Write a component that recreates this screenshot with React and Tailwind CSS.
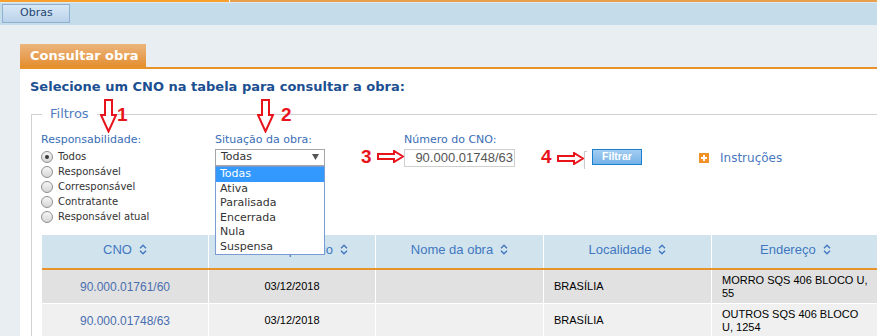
import React from "react";

function DownArrow() {
  return (
    <svg width="17" height="34" viewBox="0 0 17 34">
      <polygon points="5,1 12,1 12,16 16,16 8.5,32.5 1,16 5,16" fill="white" stroke="#e8141c" strokeWidth="2" />
    </svg>
  );
}

function RightArrow() {
  return (
    <svg width="27" height="13" viewBox="0 0 27 13">
      <polygon points="1,4 17,4 17,1 26,6.5 17,12 17,9 1,9" fill="white" stroke="#e8141c" strokeWidth="2" />
    </svg>
  );
}

function SortIcon() {
  return (
    <svg width="8" height="11" viewBox="0 0 8 11" fill="none" stroke="currentColor" strokeWidth="1.4">
      <polyline points="1,4.2 4,1.2 7,4.2" />
      <polyline points="1,6.8 4,9.8 7,6.8" />
    </svg>
  );
}

function Radio({ checked, label }) {
  return (
    <div className="flex items-center h-[15px]">
      <div className="w-[12px] h-[12px] rounded-full border border-[#8e8f8f] bg-gradient-to-b from-[#f6f6f6] to-[#d6d6d6] flex items-center justify-center">
        {checked && <div className="w-[4px] h-[4px] rounded-full bg-[#3a3a3a]" />}
      </div>
      <span className="ml-[5px] text-[10px] text-[#333] leading-none">{label}</span>
    </div>
  );
}

export default function App() {
  const options = ["Todas", "Ativa", "Paralisada", "Encerrada", "Nula", "Suspensa"];
  return (
    <div className="relative w-[877px] h-[336px] overflow-hidden bg-[#e9eef3] font-['DejaVu_Sans',sans-serif]">
      {/* top line */}
      <div className="flex h-[2px]">
        <div className="w-[229px] bg-[#f7a02e]" />
        <div className="w-[1px] bg-white" />
        <div className="flex-1 bg-[#e9a04c]" />
      </div>
      <div className="h-[1px] bg-[#dfe9f1]" />
      {/* menu bar */}
      <div className="h-[22px] bg-[#c5dcea] pl-[2px] pt-[1px]">
        <div className="w-[68px] h-[19px] border border-[#8fb0cf] bg-gradient-to-b from-[#d8e8f6] to-[#bad2ea] flex items-center pl-[17px] text-[11px] text-[#24456f]">
          Obras
        </div>
      </div>
      {/* main area */}
      <div className="pl-[20px] pt-[19px]">
        <div className="w-[126px] h-[23px] bg-gradient-to-b from-[#ecb57b] to-[#e38e2a] text-white font-bold text-[13px] pl-[10px] flex items-center">
          Consultar obra
        </div>
        <div className="h-[2px] bg-[#e8922c]" />
        <div className="bg-white h-[400px] pl-[10px] pt-[10px]">
          <div className="text-[13px] leading-[16px] font-bold text-[#1c4f91]">
            Selecione um CNO na tabela para consultar a obra:
          </div>
          <fieldset className="mt-[11px] ml-[1px] w-[900px] border border-[#d0d0d0] pl-[10px] pb-[20px]">
            <legend className="px-[8px] text-[13px] leading-[16px] text-[#4f7cc0]">Filtros</legend>
            <div className="pt-[11px] flex items-start">
              {/* col 1 */}
              <div className="w-[173px] -ml-[1px]">
                <div className="text-[11px] leading-[14px] text-[#3a6db5]">Responsabilidade:</div>
                <div className="mt-[2px] flex flex-col">
                  <Radio checked label="Todos" />
                  <Radio label="Responsável" />
                  <Radio label="Corresponsável" />
                  <Radio label="Contratante" />
                  <Radio label="Responsável atual" />
                </div>
              </div>
              {/* col 2 */}
              <div className="w-[189px] ml-[1px]">
                <div className="text-[11px] leading-[14px] text-[#3a6db5]">Situação da obra:</div>
                <div className="relative mt-[2px] w-[110px] h-[17px] border border-[#a6a6a6] flex items-center pl-[5px] text-[11px] text-[#333] bg-white">
                  Todas
                  <svg className="absolute right-[5px] top-[4px]" width="7" height="6" viewBox="0 0 7 6">
                    <polygon points="0,0 7,0 3.5,6" fill="#555" />
                  </svg>
                  <div className="absolute left-[-1px] top-[16px] w-[110px] border border-[#7a9cd3] bg-white z-10">
                    {options.map((o, i) => (
                      <div
                        key={o}
                        className={
                          i === 0
                            ? "h-[14.5px] leading-[14.5px] pl-[4px] text-[11px] bg-[#3399ff] text-white"
                            : "h-[14.5px] leading-[14.5px] pl-[4px] text-[11px] text-[#333]"
                        }
                      >
                        {o}
                      </div>
                    ))}
                  </div>
                </div>
              </div>
              {/* col 3 */}
              <div className="w-[111px]">
                <div className="text-[11px] leading-[14px] text-[#3a6db5]">Número do CNO:</div>
                <div className="mt-[2px] w-[111px] h-[18px] border border-[#cfcfcf] flex items-center justify-end pr-[1px] font-['Liberation_Sans',Arial,sans-serif] text-[13px] text-[#555]">
                  90.000.01748/63
                </div>
              </div>
              {/* button + instructions */}
              <div className="pt-[18px] ml-[69px]">
                <div className="w-[3px] h-[18px] border-l border-t border-[#cccccc]" />
              </div>
              <div className="pt-[16px] ml-[5px]">
                <div className="w-[50px] h-[16px] border border-[#1b7fd0] bg-gradient-to-b from-[#a4cdf1] to-[#74b2e7] flex items-center justify-center text-white font-bold text-[10.5px] font-['Liberation_Sans',Arial,sans-serif]">
                  Filtrar
                </div>
              </div>
              <div className="pt-[16px] ml-[57px] h-[34px] flex items-center">
                <div className="w-[10px] h-[10px] bg-[#f29226] flex items-center justify-center relative">
                  <div className="absolute w-[6px] h-[2px] bg-white" />
                  <div className="absolute w-[2px] h-[6px] bg-white" />
                </div>
                <span className="ml-[11px] text-[12px] text-[#4a78c0]">Instruções</span>
              </div>
            </div>
            {/* table */}
            <div className="mt-[11px] w-[900px] font-['Liberation_Sans',Arial,sans-serif]">
              <div className="flex gap-[1px] h-[33px] bg-white text-[13px] text-[#4277c0]">
                <div className="w-[166px] bg-[#d1e4ee] flex items-center justify-center gap-[7px] pb-[4px]">CNO<SortIcon /></div>
                <div className="w-[166px] bg-[#d1e4ee] flex items-center justify-center gap-[7px] pb-[4px]">Início do período<SortIcon /></div>
                <div className="w-[167px] bg-[#d1e4ee] flex items-center justify-center gap-[7px] pb-[4px]">Nome da obra<SortIcon /></div>
                <div className="w-[167px] bg-[#d1e4ee] flex items-center justify-center gap-[7px] pb-[4px]">Localidade<SortIcon /></div>
                <div className="w-[200px] bg-[#d1e4ee] flex items-center pl-[48px] gap-[7px] pb-[4px]">Endereço<SortIcon /></div>
              </div>
              <div className="h-[2px] bg-[#e8922c]" />
              {[
                { cno: "90.000.01761/60", addr: "MORRO SQS 406 BLOCO U, 55", bg: "bg-[#e1e1e1]" },
                { cno: "90.000.01748/63", addr: "OUTROS SQS 406 BLOCO U, 1254", bg: "bg-[#f0f0f0]" },
              ].map((r, i) => (
                <div key={i} className={i === 0 ? "flex gap-[1px] h-[33px] bg-white" : "flex gap-[1px] h-[33px] bg-white mt-[1px]"}>
                  <div className={`w-[166px] ${r.bg} flex items-center justify-center text-[12px] text-[#4a6fb0]`}>{r.cno}</div>
                  <div className={`w-[166px] ${r.bg} flex items-center justify-center text-[11px] text-black`}>03/12/2018</div>
                  <div className={`w-[167px] ${r.bg}`} />
                  <div className={`w-[167px] ${r.bg} flex items-center pl-[10px] text-[11px] text-black`}>BRASÍLIA</div>
                  <div className={`w-[200px] ${r.bg} flex items-center pl-[10px]`}>
                    <div className="w-[148px] text-[11px] leading-[13px] text-black">{r.addr}</div>
                  </div>
                </div>
              ))}
            </div>
          </fieldset>
        </div>
      </div>

      {/* annotations */}
      <div className="absolute left-[100px] top-[99px]"><DownArrow /></div>
      <div className="absolute left-[117px] top-[104px] text-[19px] leading-[22px] font-bold text-[#e8141c] font-['Liberation_Sans',Arial,sans-serif]">1</div>
      <div className="absolute left-[257px] top-[99px]"><DownArrow /></div>
      <div className="absolute left-[281px] top-[104px] text-[19px] leading-[22px] font-bold text-[#e8141c] font-['Liberation_Sans',Arial,sans-serif]">2</div>
      <div className="absolute left-[361px] top-[146px] text-[19px] leading-[22px] font-bold text-[#e8141c] font-['Liberation_Sans',Arial,sans-serif]">3</div>
      <div className="absolute left-[377px] top-[150px]"><RightArrow /></div>
      <div className="absolute left-[541px] top-[146px] text-[19px] leading-[22px] font-bold text-[#e8141c] font-['Liberation_Sans',Arial,sans-serif]">4</div>
      <div className="absolute left-[557px] top-[152px]"><RightArrow /></div>
    </div>
  );
}
